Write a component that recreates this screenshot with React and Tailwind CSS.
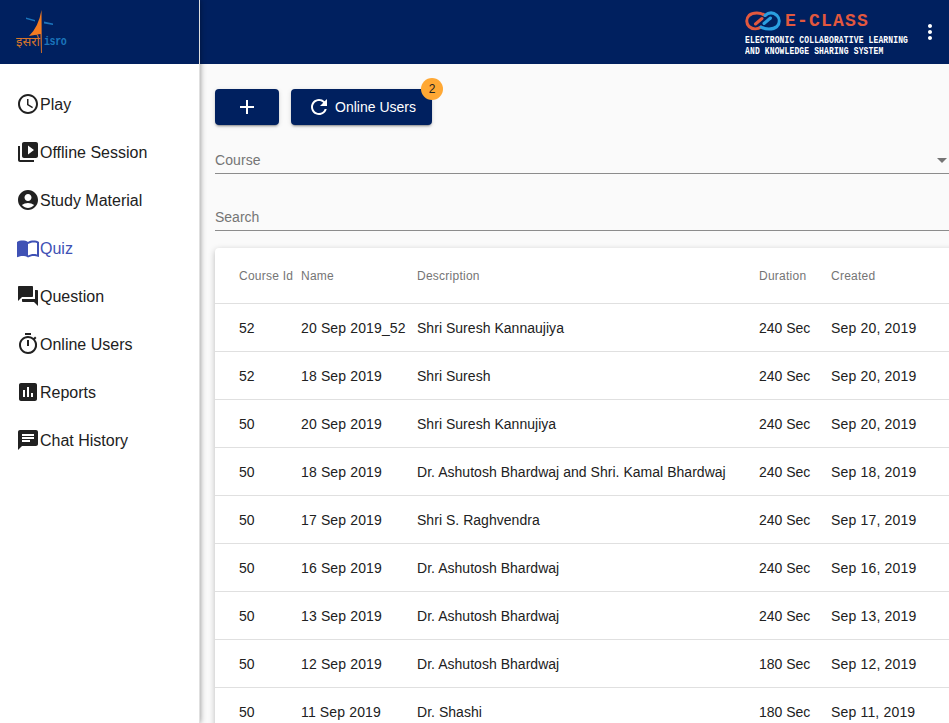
import React from "react";
import {
  MdOutlineAccessTime, MdVideoLibrary, MdAccountCircle, MdImportContacts, MdQuestionAnswer,
  MdOutlineTimer, MdAssessment, MdChat, MdRefresh, MdAdd, MdMoreVert,
} from "react-icons/md";

const nav = [
  [MdOutlineAccessTime, "Play"],
  [MdVideoLibrary, "Offline Session"],
  [MdAccountCircle, "Study Material"],
  [MdImportContacts, "Quiz", true],
  [MdQuestionAnswer, "Question"],
  [MdOutlineTimer, "Online Users"],
  [MdAssessment, "Reports"],
  [MdChat, "Chat History"],
];

const rows = [
  ["52", "20 Sep 2019_52", "Shri Suresh Kannaujiya", "240 Sec", "Sep 20, 2019"],
  ["52", "18 Sep 2019", "Shri Suresh", "240 Sec", "Sep 20, 2019"],
  ["50", "20 Sep 2019", "Shri Suresh Kannujiya", "240 Sec", "Sep 20, 2019"],
  ["50", "18 Sep 2019", "Dr. Ashutosh Bhardwaj and Shri. Kamal Bhardwaj", "240 Sec", "Sep 18, 2019"],
  ["50", "17 Sep 2019", "Shri S. Raghvendra", "240 Sec", "Sep 17, 2019"],
  ["50", "16 Sep 2019", "Dr. Ashutosh Bhardwaj", "240 Sec", "Sep 16, 2019"],
  ["50", "13 Sep 2019", "Dr. Ashutosh Bhardwaj", "240 Sec", "Sep 13, 2019"],
  ["50", "12 Sep 2019", "Dr. Ashutosh Bhardwaj", "180 Sec", "Sep 12, 2019"],
  ["50", "11 Sep 2019", "Dr. Shashi", "180 Sec", "Sep 11, 2019"],
];

function IsroLogo() {
  return (
    <div className="relative w-[52px] h-[46px]">
      <svg width="52" height="46" viewBox="0 0 52 46" className="absolute left-0 top-0">
        <path d="M25.500 0 L25.800 43 L25 43 L24.500 24 L13 26 Q22.500 17 25.500 0Z" fill="#f47b20" />
        <path d="M10 7.500l9 2.500v1.500l-9-2.500zM28 11.500l9 2v1.500l-9-1.500z" fill="#1b75bc" />
      </svg>
      <span className="absolute left-0 top-[23px] text-[13px] leading-[16px] text-[#d9762a] font-['Noto_Sans',sans-serif]">इसरो</span>
      <span className="absolute left-[28px] top-[25px] text-[10px] leading-[14px] tracking-[-0.4px] font-bold text-[#1b75bc] origin-left scale-y-[1.3] font-['Liberation_Mono',monospace]">isro</span>
    </div>
  );
}

function EclassLogo() {
  return (
    <div className="flex flex-col w-[165px]">
      <div className="flex items-center h-[24px]">
        <svg width="36" height="20" viewBox="0 0 36 20" fill="none">
          <path d="M20 4.500 C16 1.500 8 1 4 4.500 C1 7.500 1 12.500 4 15.500 C8 19 13 18 16 16" stroke="#e2583e" strokeWidth="3" strokeLinecap="round" />
          <path d="M10.500 13 L17 7.500" stroke="#e2583e" strokeWidth="3" strokeLinecap="round" />
          <path d="M16 16 C20 18.500 28 19 32 15.500 C35 12.500 35 7.500 32 4.500 C28 1 23.500 1.500 20 4.500" stroke="#2a9fe0" strokeWidth="3" strokeLinecap="round" />
          <path d="M25.500 7 L19 12.500" stroke="#2a9fe0" strokeWidth="3" strokeLinecap="round" />
        </svg>
        <span className="ml-[4px] text-[18px] leading-[20px] font-bold tracking-[1.2px] text-[#e2583e] font-['Liberation_Mono',monospace]">E-CLASS</span>
      </div>
      <div className="mt-[1px] text-[8px] leading-[11px] font-bold tracking-[0.14px] whitespace-nowrap text-white origin-left scale-y-[1.35] font-['Liberation_Mono',monospace]">ELECTRONIC COLLABORATIVE LEARNING</div>
      <div className="text-[8px] leading-[11px] font-bold tracking-[0.14px] whitespace-nowrap text-white origin-left scale-y-[1.35] font-['Liberation_Mono',monospace]">AND KNOWLEDGE SHARING SYSTEM</div>
    </div>
  );
}

export default function App() {
  return (
    <div className="flex w-[949px] h-[723px] overflow-hidden bg-[#fafafa] font-['Liberation_Sans',sans-serif] text-[#212121]">
      <aside className="w-[200px] shrink-0 flex flex-col bg-white border-r border-[#e0e0e0] shadow-[0_0_6px_rgba(0,0,0,0.45)] z-10">
        <div className="h-[64px] shrink-0 bg-[#00205f] flex items-center pl-[16px] pt-[2px]">
          <IsroLogo />
        </div>
        <nav className="pt-[16px] flex flex-col">
          {nav.map(([Icon, label, active]) => (
            <div key={label} className={`h-[48px] flex items-center pl-[16px] text-[16px] ${active ? "text-[#3f51b5]" : "text-[#212121]"}`}>
              <Icon size={24} className="shrink-0" />
              <span className="pt-[2px]">{label}</span>
            </div>
          ))}
        </nav>
      </aside>
      <div className="flex-1 min-w-0 flex flex-col">
        <header className="h-[64px] shrink-0 bg-[#00205f] flex items-center justify-end">
          <EclassLogo />
          <MdMoreVert size={24} className="text-white ml-[8px] mr-[7px]" />
        </header>
        <main className="pl-[15px] pt-[25px] w-[749px]">
          <div className="flex gap-[12px]">
            <button className="w-[64px] h-[36px] rounded-[4px] bg-[#00205f] text-white flex items-center justify-center shadow-[0_3px_1px_-2px_rgba(0,0,0,0.2),0_2px_2px_0_rgba(0,0,0,0.14),0_1px_5px_0_rgba(0,0,0,0.12)]">
              <MdAdd size={24} />
            </button>
            <button className="relative w-[141px] h-[36px] rounded-[4px] bg-[#00205f] text-white flex items-center justify-center gap-[4px] text-[14px] shadow-[0_3px_1px_-2px_rgba(0,0,0,0.2),0_2px_2px_0_rgba(0,0,0,0.14),0_1px_5px_0_rgba(0,0,0,0.12)]">
              <MdRefresh size={24} />
              <span>Online Users</span>
              <span className="absolute left-[130px] top-[-11px] w-[22px] h-[22px] rounded-full bg-[#ffa834] text-[#212121] text-[12px] flex items-center justify-center">2</span>
            </button>
          </div>
          <div className="mt-[23px] h-[26px] border-b border-[#8c8c8c] flex items-center justify-between text-[14px] text-[#757575]">
            <span className="tracking-[0.1px]">Course</span>
            <span className="w-0 h-0 mr-[2px] border-x-[5px] border-x-transparent border-t-[5px] border-t-[#757575]"></span>
          </div>
          <div className="mt-[31px] h-[26px] border-b border-[#8c8c8c] flex items-center text-[14px] text-[#757575]">
            <span>Search</span>
          </div>
          <div className="mt-[17px] w-[760px] bg-white rounded-t-[4px] shadow-[0_2px_6px_rgba(0,0,0,0.25)]">
            <div className="h-[56px] grid grid-cols-[86px_116px_342px_72px_1fr] items-center border-b border-[#e0e0e0] text-[12px] tracking-[0.25px] text-[#757575]">
              <span className="pl-[24px] whitespace-nowrap">Course Id</span>
              <span>Name</span>
              <span>Description</span>
              <span>Duration</span>
              <span>Created</span>
            </div>
            {rows.map((r, i) => (
              <div key={i} className="h-[48px] pt-[2px] grid grid-cols-[86px_116px_342px_72px_1fr] items-center border-b border-[#e0e0e0] text-[14px] text-[#212121]">
                <span className="pl-[24px]">{r[0]}</span>
                <span className="whitespace-nowrap tracking-[0.14px]">{r[1]}</span>
                <span className="whitespace-nowrap tracking-[0.03px]">{r[2]}</span>
                <span className="whitespace-nowrap">{r[3]}</span>
                <span className="whitespace-nowrap tracking-[0.17px]">{r[4]}</span>
              </div>
            ))}
          </div>
        </main>
      </div>
    </div>
  );
}
